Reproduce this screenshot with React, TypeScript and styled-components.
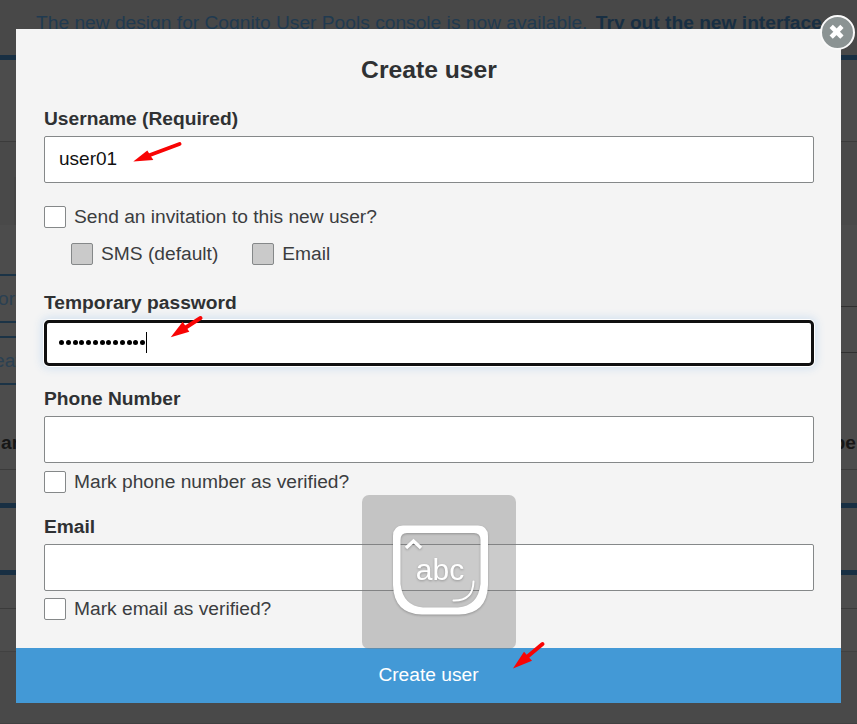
import React from "react";
import styled, { createGlobalStyle, css } from "styled-components";

const GlobalStyle = createGlobalStyle`
  *, *::before, *::after { box-sizing: border-box; }
  html, body { margin: 0; height: 724px; overflow: hidden; }
  body { background: #4b4b4b; font-family: "Liberation Sans", Arial, sans-serif; font-size: 19.2px; color: #2f3133; }
`;

const Screen = styled.div`
  position: relative;
  width: 857px;
  height: 724px;
  overflow: hidden;
`;

/* Dimmed console page behind the dialog */
const Page = styled.div`
  display: flex;
  flex-direction: column;
  height: 724px;
  background: #4c4c4c;
`;

const Banner = styled.div`
  height: 60px;
  padding: 12px 0 0 36px;
  background: #484848;
  border-bottom: 5px solid #182f43;
  color: #203a50;
  line-height: 22px;
  white-space: nowrap;
  b { color: #182f43; margin-left: 3px; }
`;

const Band = styled.div<{ $height: number; $line?: string; $thick?: number; $bg?: string }>`
  display: flex;
  justify-content: space-between;
  flex: none;
  height: ${(p) => p.$height}px;
  background: ${(p) => p.$bg ?? "transparent"};
  ${(p) => p.$line && css`border-bottom: ${p.$thick ?? 1}px solid ${p.$line};`}
`;

const SideButtons = styled.div`
  display: flex;
  flex-direction: column;
  gap: 13px;
  width: 40px;
  padding-top: 49px;
`;

const SideButton = styled.div<{ $shift: number }>`
  height: 49px;
  border: solid #1b3346;
  border-width: 2px 0;
  color: #2a4052;
  line-height: 46px;
  text-indent: -${(p) => p.$shift}px;
`;

const SideRow = styled.div`
  width: 40px;
  margin-top: 81px;
  height: 47px;
  border: solid #303030;
  border-width: 1px 0;
`;

const PageTab = styled.div`
  width: 40px;
  height: 48px;
  margin: 35px 0 0 14px;
  background: #454545;
`;

const EdgeText = styled.b`
  padding: 0 1px;
  color: #171717;
  line-height: 34px;
`;

const Dialog = styled.form`
  position: absolute;
  left: 16px;
  top: 29px;
  width: 825px;
  height: 674px;
  display: flex;
  flex-direction: column;
  background: #f4f4f4;
`;

const Body = styled.div`
  display: flex;
  flex-direction: column;
  height: 619px;
  padding: 0 27px 0 28px;
`;

const Title = styled.h1`
  margin: 0;
  padding-top: 25px;
  height: 76px;
  font-size: 24.7px;
  line-height: 31px;
  text-align: center;
`;

const Field = styled.div<{ $height: number }>`
  display: flex;
  flex-direction: column;
  flex: none;
  height: ${(p) => p.$height}px;
`;

const Label = styled.label`
  height: 31px;
  line-height: 27px;
  font-weight: bold;
`;

const Input = styled.div<{ $focused?: boolean }>`
  display: flex;
  align-items: center;
  flex: none;
  height: 47px;
  padding: 0 14px 2px;
  border: 1px solid #858889;
  border-radius: 2px;
  background: #fff;
  color: #111;
  font-size: 19px;
  ${(p) =>
    p.$focused &&
    css`
      height: 46px;
      padding: 0 12px 1px;
      border: 3px solid #101010;
      border-radius: 5px;
      box-shadow: 0 0 0 1px #fff, 0 0 9px 3px #d4e2f0;
    `}
`;

const Dot = styled.span`
  width: 5px;
  height: 5px;
  margin-right: 1.75px;
  border-radius: 50%;
  background: #000;
`;

const Caret = styled.span`
  width: 1px;
  height: 21px;
  margin-left: -1px;
  background: #000;
`;

const Check = styled.label`
  display: flex;
  align-items: center;
  gap: 8px;
  height: 22px;
  white-space: nowrap;
  color: #3b3d3f;
`;

const Box = styled.span<{ $disabled?: boolean }>`
  width: 22px;
  height: 22px;
  border: 1px solid #858889;
  border-radius: 2px;
  background: ${(p) => (p.$disabled ? "#cacaca" : "#fff")};
`;

const Invitation = styled.div`
  padding-top: 23px;
`;

const Options = styled.div`
  display: flex;
  gap: 34px;
  padding: 15px 0 0 27px;
`;

const Verify = styled.div<{ $gap: number }>`
  padding-top: ${(p) => p.$gap}px;
`;

const Submit = styled.button`
  height: 55px;
  padding: 0 0 1px;
  border: 0;
  background: #4399d6;
  color: #fff;
  font: 19.2px "Liberation Sans", Arial, sans-serif;
`;

const Close = styled.button`
  position: absolute;
  left: 820px;
  top: 15px;
  width: 35px;
  height: 35px;
  padding: 0;
  border: 2px solid #fafafa;
  border-radius: 50%;
  background: #8b9393;
  svg { display: block; }
`;

const Overlay = styled.div`
  position: absolute;
  left: 362px;
  top: 495px;
  width: 154px;
  height: 154px;
  border-radius: 7px;
  background: rgba(125, 125, 125, 0.4);
  svg { display: block; }
`;

const Pointer = styled.svg<{ $x: number; $y: number }>`
  position: absolute;
  left: ${(p) => p.$x}px;
  top: ${(p) => p.$y}px;
  overflow: visible;
`;

function Arrow({ x, y, head, tail }: { x: number; y: number; head: string; tail: string }) {
  return (
    <Pointer $x={x} $y={y} width="50" height="30">
      <path d={tail} stroke="#f80404" strokeWidth="4" strokeLinecap="round" />
      <path d={head} fill="#f80404" />
    </Pointer>
  );
}

export default function App() {
  return (
    <Screen>
      <GlobalStyle />
      <Page>
        <Banner>
          The new design for Cognito User Pools console is now available. <b>Try out the new interface.</b>
        </Banner>
        <Band $height={82} $line="#3b3b3b" />
        <Band $height={83} $bg="#494949"><PageTab /></Band>
        <Band $height={201}>
          <SideButtons>
            <SideButton $shift={2}>or</SideButton>
            <SideButton $shift={6}>eat</SideButton>
          </SideButtons>
          <SideRow />
        </Band>
        <Band $height={44} $line="#3b3b3b">
          <EdgeText>ar</EdgeText>
          <EdgeText>be</EdgeText>
        </Band>
        <Band $height={38} $line="#182f43" $thick={5} />
        <Band $height={67} $line="#182f43" $thick={5} />
        <Band $height={34} $line="#3b3b3b" />
        <Band $height={43} $line="#414141" />
        <Band $height={72} $line="#414141" $bg="#494949" />
      </Page>

      <Dialog>
        <Body>
          <Title>Create user</Title>
          <Field $height={184}>
            <Label>Username (Required)</Label>
            <Input>user01</Input>
            <Invitation>
              <Check><Box />Send an invitation to this new user?</Check>
              <Options>
                <Check><Box $disabled />SMS (default)</Check>
                <Check><Box $disabled />Email</Check>
              </Options>
            </Invitation>
          </Field>
          <Field $height={96}>
            <Label>Temporary password</Label>
            <Input $focused>
              {Array.from({ length: 13 }, (_, i) => <Dot key={i} />)}
              <Caret />
            </Input>
          </Field>
          <Field $height={128}>
            <Label>Phone Number</Label>
            <Input />
            <Verify $gap={8}><Check><Box />Mark phone number as verified?</Check></Verify>
          </Field>
          <Field $height={127}>
            <Label>Email</Label>
            <Input />
            <Verify $gap={7}><Check><Box />Mark email as verified?</Check></Verify>
          </Field>
        </Body>
        <Submit type="button">Create user</Submit>
      </Dialog>

      <Close aria-label="Close">
        <svg width="31" height="31" viewBox="0 0 31 31">
          <path d="M10.800 11l7.500 7.500M18.300 11l-7.500 7.500" stroke="#fff" strokeWidth="4.600" strokeLinecap="square" />
        </svg>
      </Close>

      <Overlay>
        <svg width="154" height="154" viewBox="0 0 154 154">
          <g filter="drop-shadow(0 1px 1px rgba(0,0,0,.25))">
            <path
              fill="#fff"
              fillRule="evenodd"
              d="M41 30.5H116Q126 31 126 41V90Q125 119 97 119.500H60Q32 119 31 90V41Q31 31 41 30.500ZM45 38Q38.500 38 38.500 45V89Q41 111 61 112.500H96Q116 111 118.500 89V45Q118.500 38 112 38Z"
            />
            <path d="M44 53L51.500 46L59 53" fill="none" stroke="#fff" strokeWidth="3.400" />
            <path d="M111.500 86.500Q111 106 91.500 105.500" fill="none" stroke="#fff" strokeWidth="2" strokeLinecap="round" />
            <text x="78" y="84.500" textAnchor="middle" fill="#fff" fontFamily="Liberation Sans, Arial, sans-serif" fontSize="30">abc</text>
          </g>
        </svg>
      </Overlay>

      <Arrow x={133} y={143} tail="M46.500 1L17 12" head="M0.300 18.500L14.300 7.500L20.300 17Z" />
      <Arrow x={170} y={316} tail="M30.500 2L15 12" head="M0.700 21.300L12.700 5.700L19.300 15.700Z" />
      <Arrow x={513} y={642} tail="M29.500 2L14 15" head="M0 26.500L11 9.700L19 18.700Z" />
    </Screen>
  );
}
